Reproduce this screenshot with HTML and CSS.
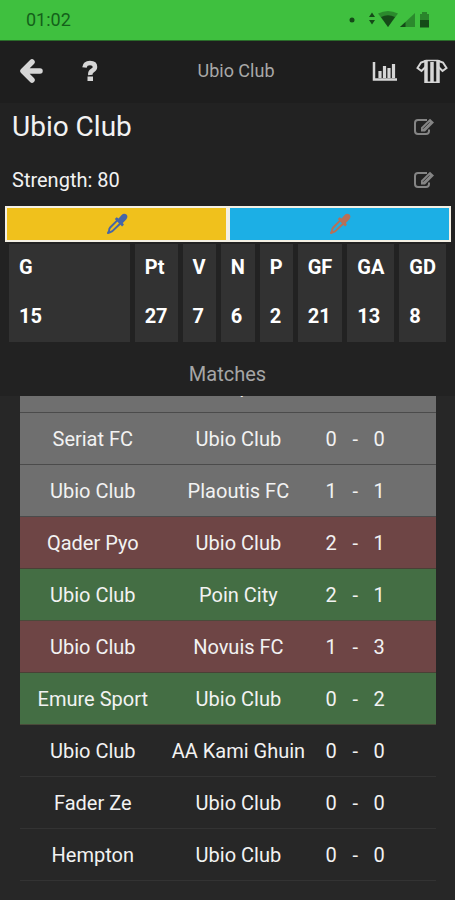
FILE: index.html
```html
<!DOCTYPE html>
<html lang="en">
<head>
<meta charset="utf-8">
<meta name="viewport" content="width=device-width, initial-scale=1">
<title>Ubio Club</title>
<link rel="stylesheet" href="styles.css">
</head>
<body>
<svg class="defs" aria-hidden="true">
  <symbol id="edit" viewBox="0 0 22 18">
    <path d="M14 2H5Q2 2 2 5v8q0 3 3 3h8q3 0 3-3v-1.500" fill="none" stroke="currentColor" stroke-width="2"/>
    <path d="M8 13.500v-4L17 .8l4 3.700L12 13.500z" fill="currentColor"/>
    <path d="M10 10.800l6.500-6.500" stroke="#222" stroke-width=".8"/>
  </symbol>
  <symbol id="dropper" viewBox="0 0 20 20">
    <path d="M10.500 6.500L3.800 13.200q-1 1-1 3L1.800 18.200q2.500-.8 4-1.700L13 9.500" fill="none" stroke="currentColor" stroke-width="1.800" stroke-linejoin="round"/>
    <path d="M8 5.500l1.700-1.600 1.700 1.200L14 2q2.300-2.200 4.600-.6 1.800 2-.2 4.500L15.300 9l1 1.700-1.700 1.500z" fill="currentColor"/>
  </symbol>
</svg>

<div class="status">
  <time>01:02</time>
  <svg width="84" height="20" viewBox="0 0 84 20" aria-hidden="true">
    <g fill="#154a18">
      <circle cx="4" cy="10" r="2.500"/>
      <path d="M24 2.500l3 4.500h-6zM24 14.500l3-4.500h-6z"/>
      <path d="M30 3.500q10-5 20 0L40 17z" opacity=".45"/>
      <path d="M33 7q7-3.500 14 0l-7 10z"/>
      <path d="M67 3v14H52z" opacity=".45"/>
      <path d="M57.500 12v5H52z"/>
      <path d="M74 2h5v2h2v6h-9V4h2z" opacity=".5"/>
      <path d="M72 10h9v7.500h-9z"/>
    </g>
  </svg>
</div>

<header class="appbar">
  <div class="actions">
    <button type="button" aria-label="Back">
      <svg width="26" height="26" viewBox="0 0 26 26"><path d="M14 4L5 13l9 9M6 13h16" fill="none" stroke="currentColor" stroke-width="5.500" stroke-linecap="round" stroke-linejoin="round"/></svg>
    </button>
    <button type="button" aria-label="Help">
      <svg width="26" height="26" viewBox="0 0 26 26"><path d="M7.500 9.500Q8 5 13 5q5 0 5 4 0 2-2.500 3.500T13.300 17" fill="none" stroke="currentColor" stroke-width="4.500"/><path d="M10.500 18.500h5.500V23h-5.500z" fill="currentColor"/></svg>
    </button>
  </div>
  <h1>Ubio Club</h1>
  <div class="actions end">
    <button type="button" aria-label="Statistics">
      <svg width="26" height="22" viewBox="0 0 26 22"><path d="M2 2v17.500h23" fill="none" stroke="currentColor" stroke-width="2.500"/><path d="M8 11v7M12.500 6v12M17 8v10M21.500 4v14" fill="none" stroke="currentColor" stroke-width="3.200"/></svg>
    </button>
    <button type="button" aria-label="Kit">
      <svg width="32" height="26" viewBox="0 0 32 26"><g fill="none" stroke="currentColor"><path d="M9.500 3L5 4.500 1.500 10l4 3 4-4M22.500 3L27 4.500l3.500 5.500-4 3-4-4" stroke-width="2"/><path d="M9.500 2.500h13M9.500 24.200h13" stroke-width="1.500"/><path d="M10 2v23M16 4v21M22 2v23" stroke-width="3.500"/></g></svg>
    </button>
  </div>
</header>

<main>
  <section class="team">
    <div class="line">
      <h2>Ubio Club</h2>
      <button type="button" aria-label="Edit name"><svg width="22" height="18"><use href="#edit"/></svg></button>
    </div>
    <div class="line">
      <p>Strength: 80</p>
      <button type="button" aria-label="Edit strength"><svg width="22" height="18"><use href="#edit"/></svg></button>
    </div>
    <div class="colors">
      <button type="button" class="primary" aria-label="First colour"><svg width="22" height="22"><use href="#dropper"/></svg></button>
      <button type="button" class="secondary" aria-label="Second colour"><svg width="22" height="22"><use href="#dropper"/></svg></button>
    </div>
    <table class="stats">
      <thead><tr><th>G</th><th>Pt</th><th>V</th><th>N</th><th>P</th><th>GF</th><th>GA</th><th>GD</th></tr></thead>
      <tbody><tr><td>15</td><td>27</td><td>7</td><td>6</td><td>2</td><td>21</td><td>13</td><td>8</td></tr></tbody>
    </table>
    <h3>Matches</h3>
  </section>

  <section class="list">
    <table class="matches">
      <tbody>
        <tr class="draw"><td>Ubio Club</td><td>Hempton</td><td><div class="score"><span>0</span><span>-</span><span>0</span></div></td></tr>
        <tr class="draw"><td>Seriat FC</td><td>Ubio Club</td><td><div class="score"><span>0</span><span>-</span><span>0</span></div></td></tr>
        <tr class="draw"><td>Ubio Club</td><td>Plaoutis FC</td><td><div class="score"><span>1</span><span>-</span><span>1</span></div></td></tr>
        <tr class="loss"><td>Qader Pyo</td><td>Ubio Club</td><td><div class="score"><span>2</span><span>-</span><span>1</span></div></td></tr>
        <tr class="win"><td>Ubio Club</td><td>Poin City</td><td><div class="score"><span>2</span><span>-</span><span>1</span></div></td></tr>
        <tr class="loss"><td>Ubio Club</td><td>Novuis FC</td><td><div class="score"><span>1</span><span>-</span><span>3</span></div></td></tr>
        <tr class="win"><td>Emure Sport</td><td>Ubio Club</td><td><div class="score"><span>0</span><span>-</span><span>2</span></div></td></tr>
        <tr><td>Ubio Club</td><td>AA Kami Ghuin</td><td><div class="score"><span>0</span><span>-</span><span>0</span></div></td></tr>
        <tr><td>Fader Ze</td><td>Ubio Club</td><td><div class="score"><span>0</span><span>-</span><span>0</span></div></td></tr>
        <tr><td>Hempton</td><td>Ubio Club</td><td><div class="score"><span>0</span><span>-</span><span>0</span></div></td></tr>
      </tbody>
    </table>
  </section>
</main>
</body>
</html>
```
FILE: styles.css
```css
* { box-sizing: border-box; }

body {
  margin: 0;
  min-height: 100vh;
  display: flex;
  flex-direction: column;
  background: #272727;
  color: #f2f2f2;
  font: 20px/24px Roboto, sans-serif;
}

h1, h2, h3, p { margin: 0; font-weight: 400; }

button {
  display: flex;
  align-items: center;
  justify-content: center;
  padding: 0;
  border: 0;
  background: none;
  color: inherit;
  cursor: pointer;
}

table { width: 100%; }

.defs { display: none; }

.status {
  display: flex;
  align-items: center;
  justify-content: space-between;
  height: 41px;
  padding: 0 23px 0 26px;
  border-bottom: 1px solid #2a6b2a;
  background: #3fc03f;
  color: #14601a;
  font-size: 18px;
}

.appbar {
  display: grid;
  grid-template-columns: 1fr auto 1fr;
  align-items: center;
  height: 62px;
  padding: 0 7px 2px 18px;
  background: #1e1e1e;
  color: #d6d6d6;
}

.appbar h1 {
  padding-left: 6px;
  color: #a8a8a8;
  font-size: 18px;
}

.actions { display: flex; align-items: center; gap: 33px; }
.end { justify-content: flex-end; gap: 18px; }

main {
  flex: 1;
  display: flex;
  flex-direction: column;
}

.team { padding: 0 4px; background: #222; }

.line {
  display: flex;
  align-items: center;
  justify-content: space-between;
  height: 48px;
  padding: 0 16px 0 8px;
}

.line + .line { height: 55px; padding-top: 3px; }
.line h2 { font-size: 28px; line-height: 32px; }
.line button { color: #858585; }

.colors {
  display: grid;
  grid-template-columns: 1fr 1fr;
  height: 36px;
  margin: 0 0 2px 1px;
}

.colors button { border: 2px solid #f4f0e4; }
.primary { background: #f0c11c; color: #4666a8; }
.secondary { background: #1cafe5; color: #b77058; }

.stats { border-spacing: 5px 0; font-weight: 700; color: #fff; }

.stats th, .stats td {
  height: 49px;
  padding: 0 10px 4px;
  background: #323232;
  text-align: left;
}

.stats th:first-child { width: 100%; }

.team h3 {
  padding: 20px 0 10px;
  color: #a6a6a6;
  font-size: 20px;
  text-align: center;
}

.list { flex: 1; overflow: hidden; padding: 0 19px 0 20px; }

/* The list is scrolled, so its first row shows only its lower edge. */
.matches {
  margin-top: -36px;
  table-layout: fixed;
  border-collapse: collapse;
}

.matches td {
  width: 35%;
  height: 52px;
  padding: 1px 0 0;
  border-bottom: 1px solid #333;
  text-align: center;
  white-space: nowrap;
}

.matches td:last-child { width: 30%; }
.score { display: flex; padding-left: 8px; }
.score span { width: 24px; }

.draw td { background: #6f6f6f; border-color: #4b4b4b; }
.loss td { background: #6e4545; border-color: #4a4036; }
.win td { background: #446e44; border-color: #4a4a3a; }
```
